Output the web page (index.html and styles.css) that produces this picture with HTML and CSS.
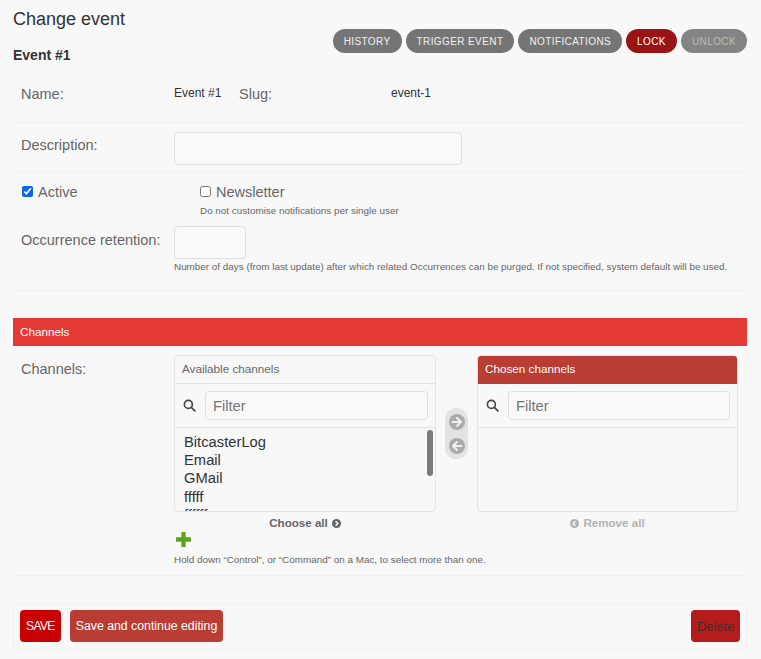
FILE: index.html
```html
<!DOCTYPE html>
<html lang="en">
<head>
    <meta charset="UTF-8">
    <meta name="viewport" content="width=device-width, initial-scale=1.0">
    <title>Change event</title>
    <link rel="stylesheet" href="styles.css">
</head>
<body>
    <h1 class="title">Change event</h1>
    <div class="head-row">
        <h2 class="subtitle">Event #1</h2>
        <ul class="tools">
            <li><a class="pill">History</a></li>
            <li><a class="pill">Trigger event</a></li>
            <li><a class="pill">Notifications</a></li>
            <li><a class="pill pill-lock">Lock</a></li>
            <li><a class="pill pill-off">Unlock</a></li>
        </ul>
    </div>

    <div class="row row-name">
        <label class="label">Name:</label>
        <span class="value value-name">Event #1</span>
        <label class="label label-slug">Slug:</label>
        <span class="value">event-1</span>
    </div>
    <div class="row row-desc">
        <label class="label">Description:</label>
        <input class="text-input desc-input" type="text">
    </div>
    <div class="row row-checks">
        <div class="check check-active">
            <input type="checkbox" checked>
            <label>Active</label>
        </div>
        <div>
            <div class="check">
                <input type="checkbox">
                <label>Newsletter</label>
            </div>
            <p class="help help-news">Do not customise notifications per single user</p>
        </div>
    </div>
    <div class="row-retention">
        <div class="retention-line">
            <label class="label">Occurrence retention:</label>
            <input class="text-input days-input" type="text">
        </div>
        <p class="help help-days">Number of days (from last update) after which related Occurrences can be purged. If not specified, system default will be used.</p>
    </div>

    <h2 class="section">Channels</h2>
    <div class="row-channels">
        <label class="label">Channels:</label>
        <div class="channels-body">
            <div class="selector">
                <div class="sel-col">
                    <div class="box">
                        <h3 class="box-title">Available channels</h3>
                        <div class="filter">
                            <svg class="search" viewBox="0 0 14 14"><circle cx="5.8" cy="5.8" r="4.3"/><path d="M9 9l3.8 3.8"/></svg>
                            <input class="filter-input" type="text" placeholder="Filter">
                        </div>
                        <div class="options">
                            <div class="opt">BitcasterLog</div>
                            <div class="opt">Email</div>
                            <div class="opt">GMail</div>
                            <div class="opt">fffff</div>
                            <div class="opt">ffffff</div>
                            <span class="scroll-thumb"></span>
                        </div>
                    </div>
                    <a class="all all-on">Choose all
                        <svg class="circle-arrow" viewBox="0 0 12 12"><circle cx="6" cy="6" r="6"/><path d="M4.8 3l3 3-3 3"/></svg>
                    </a>
                </div>
                <div class="movers">
                    <svg class="mover" viewBox="0 0 16 16"><circle cx="8" cy="8" r="8"/><path d="M3.5 8h8M8 4l4 4-4 4"/></svg>
                    <svg class="mover" viewBox="0 0 16 16"><circle cx="8" cy="8" r="8"/><path d="M12.5 8h-8M8 4L4 8l4 4"/></svg>
                </div>
                <div class="sel-col sel-col-right">
                    <div class="box">
                        <h3 class="box-title box-title-red">Chosen channels</h3>
                        <div class="filter">
                            <svg class="search" viewBox="0 0 14 14"><circle cx="5.8" cy="5.8" r="4.3"/><path d="M9 9l3.8 3.8"/></svg>
                            <input class="filter-input" type="text" placeholder="Filter">
                        </div>
                        <div class="options"></div>
                    </div>
                    <a class="all all-off">
                        <svg class="circle-arrow" viewBox="0 0 12 12"><circle cx="6" cy="6" r="6"/><path d="M7.2 3l-3 3 3 3"/></svg>
                        Remove all</a>
                </div>
            </div>
            <svg class="add" viewBox="0 0 14 14"><path d="M5 0h4v5h5v4H9v5H5V9H0V5h5z"/></svg>
            <p class="help help-hold">Hold down “Control”, or “Command” on a Mac, to select more than one.</p>
        </div>
    </div>

    <div class="submit-row">
        <button class="btn btn-save">SAVE</button>
        <button class="btn btn-continue">Save and continue editing</button>
        <button class="btn btn-delete">Delete</button>
    </div>
</body>
</html>
```

FILE: styles.css
```css
* {
    box-sizing: border-box;
}
body {
    margin: 0;
    padding: 0 14px 0 13px;
    background: #f8f8f8;
    font-family: "Liberation Sans", Arial, sans-serif;
    color: #333;
}
.title {
    margin: 0;
    padding-top: 9px;
    font-size: 18px;
    line-height: 21px;
    font-weight: 400;
    color: #333;
}
.head-row {
    display: flex;
    justify-content: space-between;
    height: 47px;
}
.subtitle {
    margin: 16px 0 0;
    font-size: 14px;
    line-height: 18px;
    font-weight: 700;
}
.tools {
    display: flex;
    gap: 4px;
    margin: -1px 0 0;
    padding: 0;
    list-style: none;
}
.pill {
    display: block;
    height: 24px;
    padding: 0 11px;
    border-radius: 12px;
    background: #757575;
    color: #f2f2f2;
    font-size: 10px;
    line-height: 25px;
    letter-spacing: 0.4px;
    text-transform: uppercase;
}
.pill-lock {
    background: #991414;
    color: #fff;
}
.pill-off {
    background: #848484;
    color: #bdbdbd;
}

.row {
    display: flex;
    border-bottom: 1px solid #f0f0f0;
}
.label {
    display: block;
    width: 161px;
    flex: none;
    padding-left: 8px;
    color: #666;
    font-size: 14.5px;
    line-height: 18px;
}
.value {
    padding-top: 1px;
    font-size: 12px;
    line-height: 14px;
    color: #333;
}
.row-name {
    height: 46px;
    padding-top: 8px;
}
.value-name {
    width: 65px;
}
.label-slug {
    width: 152px;
    padding-left: 0;
}
.row-desc {
    height: 50px;
    padding-top: 9px;
}
.row-desc .label {
    padding-top: 4px;
}
.text-input {
    display: block;
    border: 1px solid #dedede;
    border-radius: 4px;
    background: #f9f9f9;
    outline: none;
}
.desc-input {
    width: 288px;
    height: 33px;
}
.days-input {
    width: 72px;
    height: 33px;
}
.row-checks {
    border-bottom: 0;
    height: 50px;
    padding: 10px 0 0 9px;
}
.check {
    display: flex;
    align-items: flex-start;
    color: #666;
    font-size: 14.5px;
    line-height: 18px;
}
.check input {
    width: 11px;
    height: 11px;
    margin: 3px 5px 0 0;
    accent-color: #0a66f2;
}
.check-active {
    width: 178px;
}
.help {
    margin: 0;
    font-size: 9.9px;
    line-height: 12px;
    color: #666;
}
.help-news {
    margin-top: 4px;
}
.row-retention {
    height: 65px;
    border-bottom: 1px solid #f0f0f0;
    margin-top: 3px;
}
.retention-line {
    display: flex;
}
.retention-line .label {
    padding-top: 5px;
    white-space: nowrap;
}
.help-days {
    margin: 2px 0 0 161px;
    white-space: nowrap;
}

.section {
    margin: 27px 0 0;
    height: 28px;
    padding-left: 7px;
    background: #e53935;
    color: #fff;
    font-size: 11.7px;
    line-height: 27px;
    font-weight: 400;
}
.row-channels {
    display: flex;
    padding-top: 9px;
    height: 230px;
    border-bottom: 1px solid #f0f0f0;
}
.row-channels .label {
    padding-top: 5px;
}
.channels-body {
    flex: 1;
}
.selector {
    display: flex;
    width: 564px;
}
.sel-col {
    width: 262px;
    flex: none;
}
.sel-col-right {
    width: 261px;
}
.box {
    height: 157px;
    border: 1px solid #e4e4e4;
    border-radius: 4px;
    overflow: hidden;
}
.box-title {
    margin: 0;
    height: 28px;
    padding-left: 7px;
    border-bottom: 1px solid #e4e4e4;
    font-size: 11.7px;
    line-height: 26px;
    font-weight: 400;
    color: #666;
}
.box-title-red {
    background: #b93c35;
    border-bottom-color: #b93c35;
    color: #fff;
}
.filter {
    display: flex;
    align-items: center;
    height: 44px;
    padding: 0 7px 0 8px;
    border-bottom: 1px solid #e4e4e4;
}
.search {
    width: 13px;
    height: 13px;
    margin: -1px 9px 0 0;
    flex: none;
    fill: none;
    stroke: #444;
    stroke-width: 1.8;
    stroke-linecap: round;
}
.filter-input {
    width: 100%;
    height: 29px;
    padding: 0 7px;
    border: 1px solid #e0e0e0;
    border-radius: 4px;
    background: #f9f9f9;
    outline: none;
    font-family: "Liberation Sans", Arial, sans-serif;
    font-size: 14.7px;
}
.filter-input::placeholder {
    color: #757575;
}
.options {
    position: relative;
    height: 84px;
    padding: 5px 9px 0;
    overflow: hidden;
    font-size: 14.75px;
    line-height: 18.2px;
    color: #333;
}
.scroll-thumb {
    position: absolute;
    top: 2px;
    right: 2px;
    width: 6px;
    height: 46px;
    border-radius: 3px;
    background: #7c7c7c;
}
.movers {
    display: flex;
    flex-direction: column;
    align-items: center;
    gap: 8px;
    width: 23px;
    height: 51px;
    margin: 53px 9px 0;
    padding-top: 6px;
    border-radius: 12px;
    background: #e3e3e3;
    flex: none;
}
.mover {
    width: 16px;
    height: 16px;
    flex: none;
    fill: #ababab;
    stroke: #f0f0f0;
    stroke-width: 2;
    stroke-linecap: round;
    stroke-linejoin: round;
}
.mover circle {
    stroke: none;
}
.all {
    display: flex;
    justify-content: center;
    align-items: center;
    gap: 4px;
    margin-top: 4px;
    font-size: 11.6px;
    line-height: 14px;
    font-weight: 700;
}
.all-on {
    color: #666;
}
.all-off {
    color: #b3b3b3;
}
.circle-arrow {
    width: 9px;
    height: 9px;
    stroke: #f8f8f8;
    stroke-width: 2;
    fill: none;
}
.all-on .circle-arrow circle {
    fill: #666;
    stroke: none;
}
.all-off .circle-arrow circle {
    fill: #b3b3b3;
    stroke: none;
}
.add {
    display: block;
    width: 15px;
    height: 15px;
    margin: 2px 0 0 2px;
    fill: #5aa51f;
}
.help-hold {
    margin-top: 7px;
}
.submit-row {
    display: flex;
    gap: 9px;
    margin-top: 27px;
    height: 47px;
    padding: 6px;
    border: 1px solid #f1f1f1;
    border-radius: 4px;
}
.btn {
    height: 32px;
    padding: 0 6px;
    border: 0;
    border-radius: 4px;
    color: #fff;
    font-family: "Liberation Sans", Arial, sans-serif;
    font-size: 12.3px;
}
.btn-save {
    background: #c80000;
    font-size: 12px;
    letter-spacing: -0.6px;
}
.btn-continue {
    background: #b93c35;
}
.btn-delete {
    margin-left: auto;
    padding: 0 5.5px;
    background: #b71c1c;
    color: #333;
    font-size: 13px;
}
```
